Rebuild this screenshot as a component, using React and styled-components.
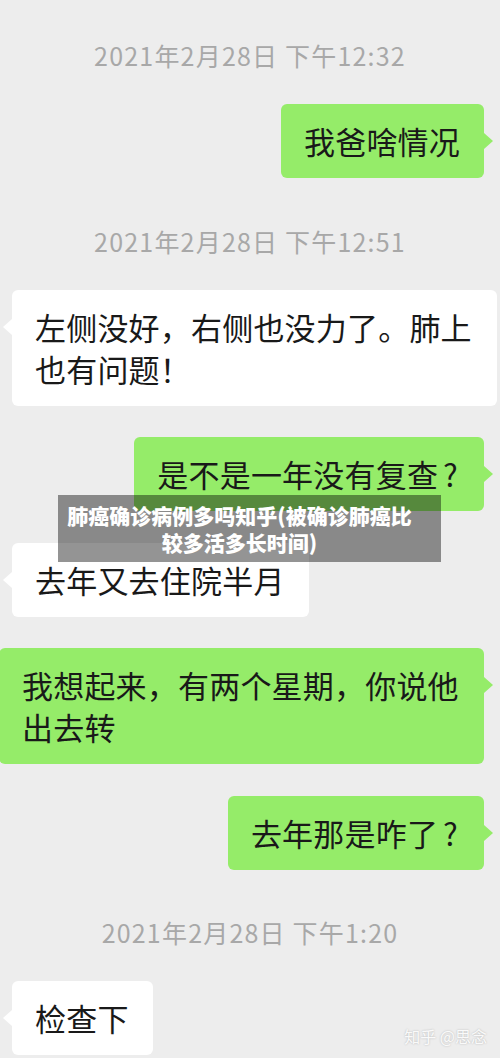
import React from "react";
import styled, { createGlobalStyle, css } from "styled-components";

const GlobalStyle = createGlobalStyle`
  html, body { margin: 0; padding: 0; background: #ededed; overflow: hidden; }
  body { font-family: "Noto Sans CJK SC", "Noto Sans", sans-serif; }
  * { box-sizing: border-box; }
`;

const Page = styled.div`
  position: relative;
  width: 500px;
  height: 1058px;
  padding-top: 24px;
  display: flex;
  flex-direction: column;
  overflow: hidden;
`;

const Timestamp = styled.div`
  text-align: center;
  font-size: 25px;
  line-height: 30px;
  letter-spacing: 1.2px;
  color: #a8a8a8;
  margin: 16px 0 34px;
`;

const Row = styled.div`
  display: flex;
  justify-content: ${(p) => (p.$side === "right" ? "flex-end" : "flex-start")};
  padding: 0 16px 0 12px;
  margin-bottom: 31.5px;
`;

const Bubble = styled.div`
  position: relative;
  flex-shrink: 0;
  max-width: 485px;
  padding: 16px 24px 16px 23px;
  border-radius: 6px;
  font-size: 31px;
  line-height: 42px;
  letter-spacing: 0.2px;
  color: #191919;
  background: ${(p) => (p.$side === "right" ? "#95ec69" : "#ffffff")};

  &::before {
    content: "";
    position: absolute;
    top: 29px;
    border-top: 8px solid transparent;
    border-bottom: 8px solid transparent;
    ${(p) =>
      p.$side === "right"
        ? css`
            right: -9px;
            border-left: 9px solid #95ec69;
          `
        : css`
            left: -9px;
            border-right: 9px solid #ffffff;
          `}
  }
`;

const Question = styled.span`
  margin-left: 5px;
  margin-right: 2px;
`;

const Caption = styled.div`
  position: absolute;
  left: 58px;
  top: 495px;
  width: 383px;
  height: 67px;
  padding: 0 20px 0 0;
  display: flex;
  align-items: center;
  justify-content: center;
  text-align: center;
  background: rgba(0, 0, 0, 0.42);
  color: #ffffff;
  font-weight: 900;
  font-size: 21px;
  line-height: 27px;
`;

const Watermark = styled.div`
  position: absolute;
  right: 13px;
  top: 1026px;
  font-size: 16px;
  line-height: 20px;
  color: rgba(255, 255, 255, 0.92);
  text-shadow: 0 0 2px rgba(0, 0, 0, 0.25);
`;

const items = [
  { type: "time", text: "2021年2月28日 下午12:32" },
  { type: "msg", side: "right", text: "我爸啥情况" },
  { type: "time", text: "2021年2月28日 下午12:51" },
  { type: "msg", side: "left", text: "左侧没好，右侧也没力了。肺上也有问题！" },
  { type: "msg", side: "right", text: "是不是一年没有复查", q: true },
  { type: "msg", side: "left", text: "去年又去住院半月" },
  { type: "msg", side: "right", text: "我想起来，有两个星期，你说他出去转" },
  { type: "msg", side: "right", text: "去年那是咋了", q: true },
  { type: "time", text: "2021年2月28日 下午1:20" },
  { type: "msg", side: "left", text: "检查下" },
];

export default function App() {
  return (
    <>
      <GlobalStyle />
      <Page>
        {items.map((it, i) =>
          it.type === "time" ? (
            <Timestamp key={i}>{it.text}</Timestamp>
          ) : (
            <Row key={i} $side={it.side}>
              <Bubble $side={it.side}>
                {it.text}
                {it.q && <Question>?</Question>}
              </Bubble>
            </Row>
          )
        )}
        <Caption>
          肺癌确诊病例多吗知乎(被确诊肺癌比
          <br />
          较多活多长时间)
        </Caption>
        <Watermark>知乎 @思念</Watermark>
      </Page>
    </>
  );
}
